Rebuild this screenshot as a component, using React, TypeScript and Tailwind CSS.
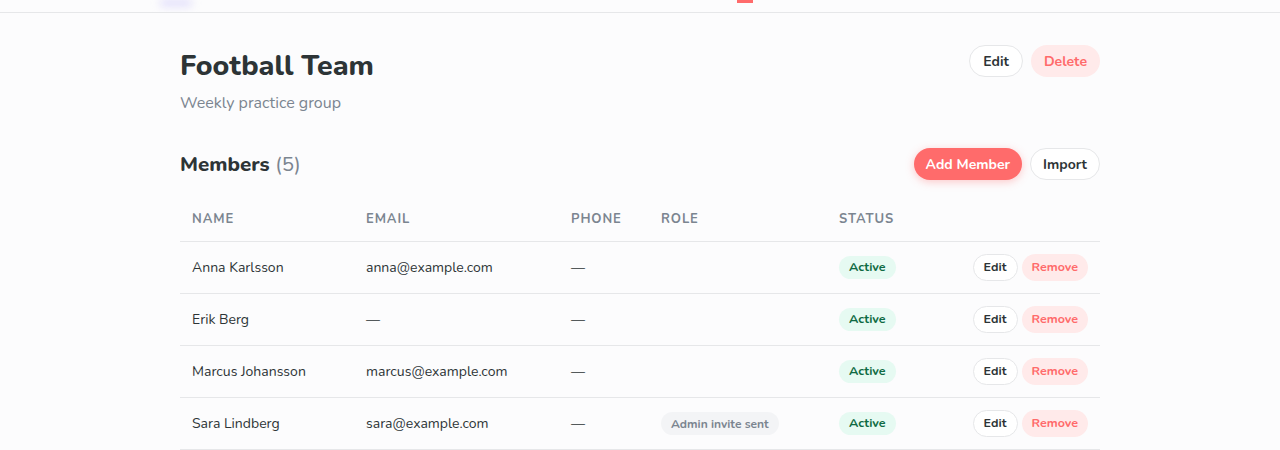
import React from "react";

type Member = { name: string; email: string; phone: string; role?: string };

const members: Member[] = [
  { name: "Anna Karlsson", email: "anna@example.com", phone: "—" },
  { name: "Erik Berg", email: "—", phone: "—" },
  { name: "Marcus Johansson", email: "marcus@example.com", phone: "—" },
  { name: "Sara Lindberg", email: "sara@example.com", phone: "—", role: "Admin invite sent" },
];

const cols = "grid grid-cols-[174px_205px_90px_178px_101px_1fr]";

export default function App() {
  return (
    <div
      className="min-h-[450px] bg-[#fcfcfd] text-[#2d3436]"
      style={{ fontFamily: '"Nunito", "Lato", "Noto Sans", sans-serif' }}
    >
      <div className="h-[13px] border-b border-[#e6e7e9] bg-[#fcfcfd] overflow-hidden">
        <div className="mx-auto w-[960px] flex items-start">
          <div className="w-[32px] h-[6px] rounded-full bg-[#dcd8fb] blur-[4px]" />
          <div className="ml-[545px] w-[16px] h-[3px] bg-[#ff6b6b]" />
        </div>
      </div>

      <main className="mx-auto w-[920px] pt-[32px]">
        <div className="flex justify-between items-start">
          <div>
            <h1 className="text-[28.5px] leading-[42px] font-extrabold text-[#2d3436]">Football Team</h1>
            <p className="mt-[4px] text-[16px] leading-[24px] text-[#7b8590]">Weekly practice group</p>
          </div>
          <div className="flex gap-2">
            <button className="h-[32px] px-[13px] rounded-full border border-[#e6e7e9] bg-white text-[14px] font-bold text-[#2d3436]">
              Edit
            </button>
            <button className="h-[32px] px-[13px] rounded-full bg-[#ffeaea] text-[14px] font-bold text-[#ff6b6b]">
              Delete
            </button>
          </div>
        </div>

        <div className="mt-[33px] flex justify-between items-center h-[32px]">
          <h2 className="text-[20.5px] leading-[32px] font-extrabold text-[#2d3436]">
            Members <span className="font-normal text-[#7b8590]">(5)</span>
          </h2>
          <div className="flex gap-2">
            <button className="h-[32px] px-[12px] rounded-full bg-[#ff6b6b] text-[14px] font-bold text-white shadow-[0_2px_8px_rgba(255,107,107,0.35)]">
              Add Member
            </button>
            <button className="h-[32px] px-[12px] rounded-full border border-[#e6e7e9] bg-white text-[14px] font-bold text-[#2d3436]">
              Import
            </button>
          </div>
        </div>

        <div className="mt-[13px]">
          <div className={`${cols} h-[49px] pt-[6px] items-center border-b border-[#e6e7e9] text-[13px] font-bold tracking-[0.07em] uppercase text-[#7b8590]`}>
            <div className="px-3">Name</div>
            <div className="px-3">Email</div>
            <div className="px-3">Phone</div>
            <div className="px-3">Role</div>
            <div className="px-3">Status</div>
            <div className="px-3" />
          </div>
          {members.map((m) => (
            <div key={m.name} className={`${cols} h-[52px] items-center border-b border-[#e6e7e9] text-[14px] text-[#2d3436]`}>
              <div className="px-3">{m.name}</div>
              <div className="px-3">{m.email}</div>
              <div className="px-3">{m.phone}</div>
              <div className="px-3">
                {m.role && (
                  <span className="inline-flex items-center h-[23px] px-[10px] rounded-full bg-[#f3f4f6] text-[12px] font-bold text-[#7b8590]">
                    {m.role}
                  </span>
                )}
              </div>
              <div className="px-3">
                <span className="inline-flex items-center h-[23px] px-[10px] rounded-full bg-[#e6faf2] text-[12.5px] font-bold text-[#0f6b44]">
                  Active
                </span>
              </div>
              <div className="px-3 flex justify-end gap-1">
                <button className="h-[27px] px-[10px] rounded-full border border-[#e6e7e9] bg-white text-[12.5px] font-bold text-[#2d3436]">
                  Edit
                </button>
                <button className="h-[27px] px-[10px] rounded-full bg-[#ffeaea] text-[12.5px] font-bold text-[#ff6b6b]">
                  Remove
                </button>
              </div>
            </div>
          ))}
        </div>
      </main>
    </div>
  );
}
